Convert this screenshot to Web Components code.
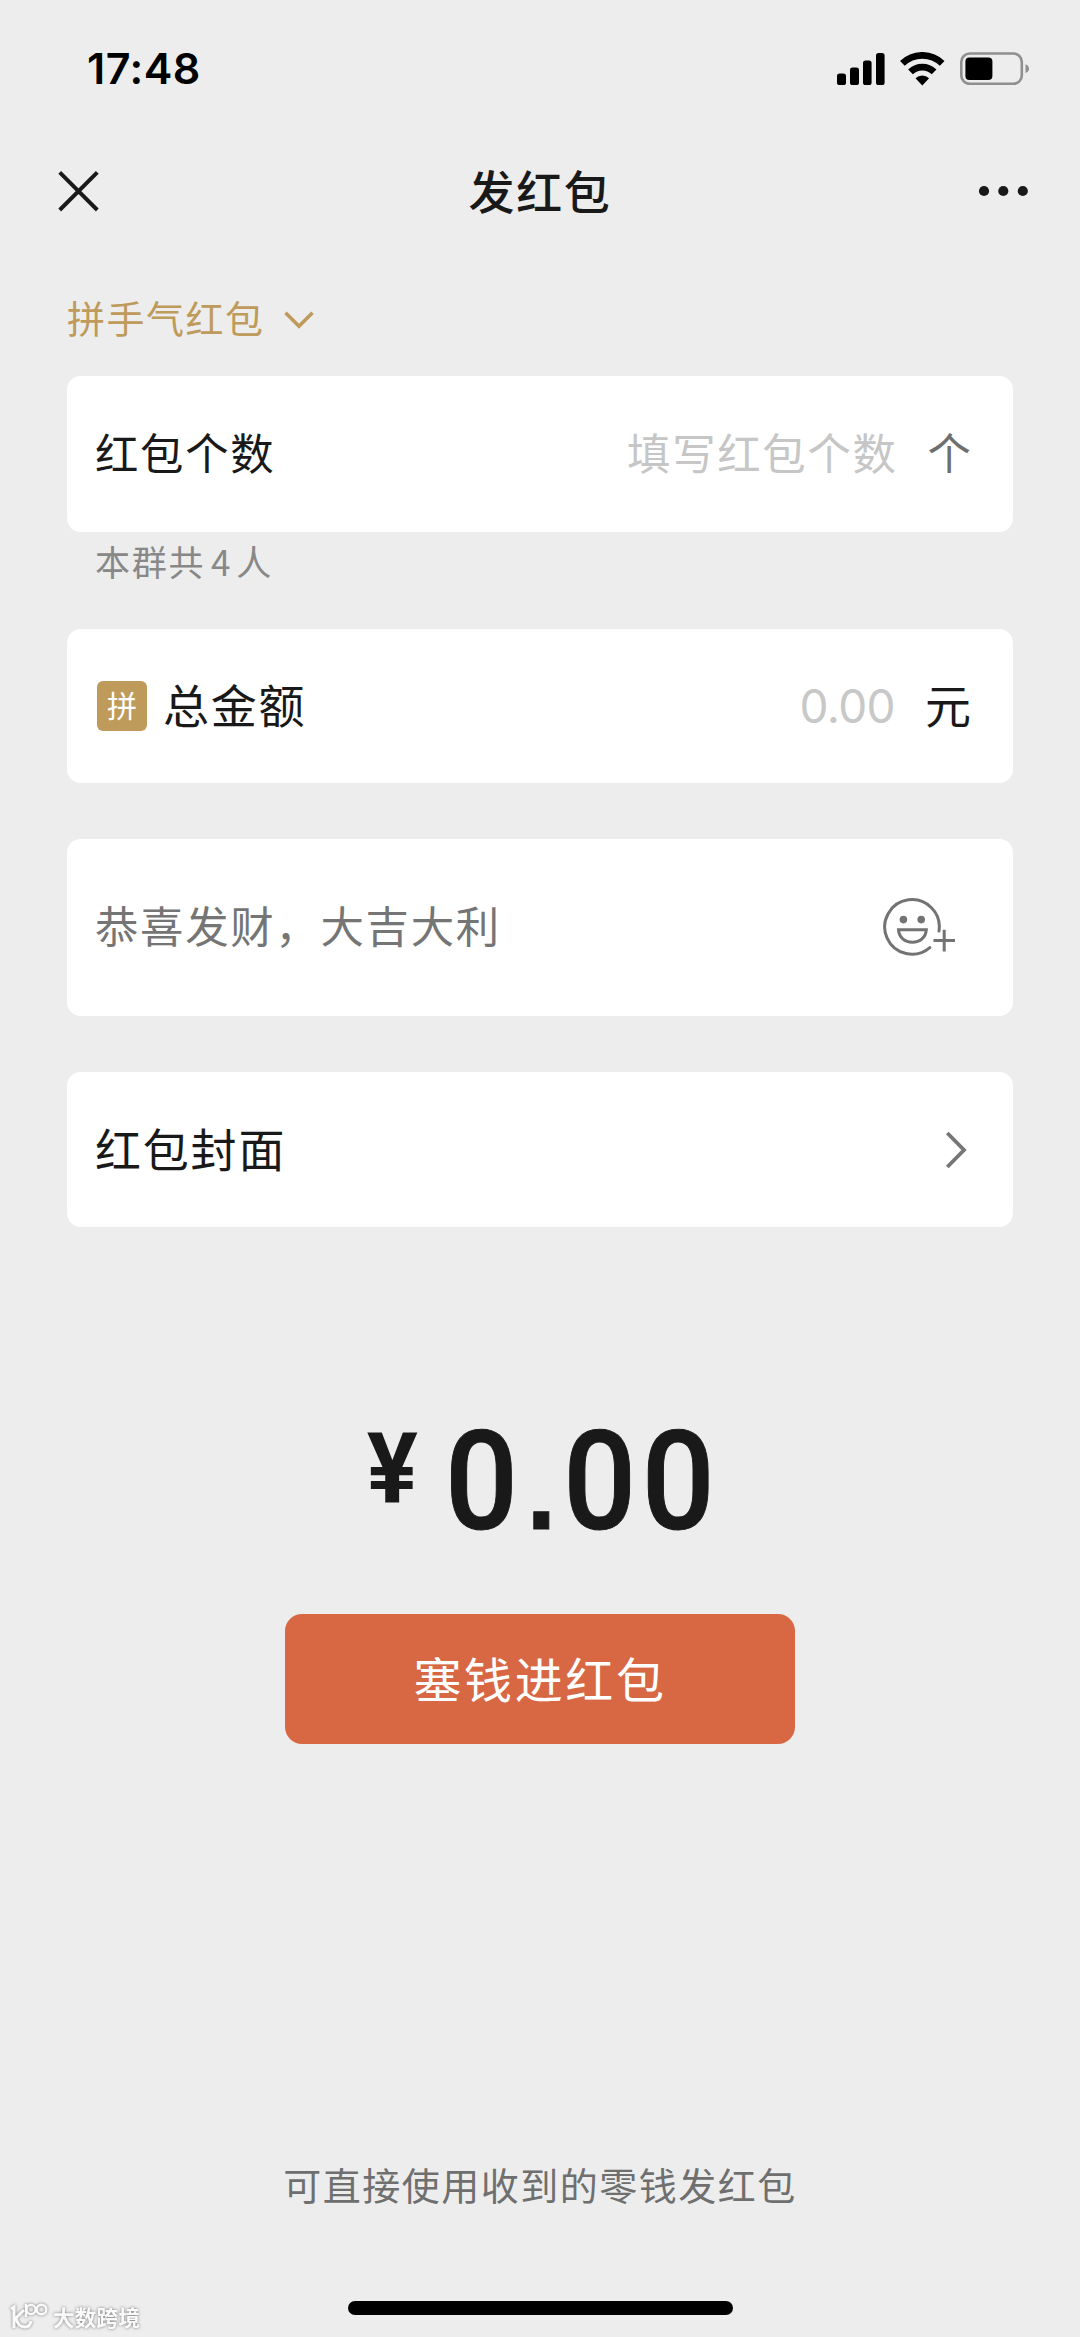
<!DOCTYPE html>
<html lang="zh-CN">
<head>
<meta charset="utf-8">
<title>发红包</title>
<style>
html,body{margin:0;padding:0;background:#ededed}
body{font-family:"Noto Sans CJK SC",sans-serif;color:#191919}
</style>
</head>
<body>
<packet-page></packet-page>
<script>
const define = (name, html) => customElements.define(name, class extends HTMLElement {
  constructor() {
    super();
    const t = document.createElement('template');
    t.innerHTML = html;
    this.attachShadow({mode: 'open'}).appendChild(t.content.cloneNode(true));
  }
});

define('status-bar', `
<style>
:host{display:flex;box-sizing:border-box;height:137px;padding:0 51px 0 87px;align-items:center;justify-content:space-between;color:#000}
.time{font:600 43px/1 Inter,sans-serif;letter-spacing:.5px}
.icons{display:flex;align-items:center;gap:15px}
svg{display:block}
</style>
<span class="time">17:48</span>
<div class="icons">
<svg width="48" height="33" viewBox="0 0 48 33"><rect x="0" y="21.5" width="9" height="11.5" rx="2.6"/><rect x="13" y="15.5" width="9" height="17.5" rx="2.6"/><rect x="26" y="8.5" width="8.6" height="24.5" rx="2.6"/><rect x="39" y="1" width="8.6" height="32" rx="2.6"/></svg>
<svg width="45" height="34" viewBox="0 0 45 34"><g fill="none" stroke="#000" stroke-width="6.7"><path d="M2.4 11.4A28.6 28.6 0 0 1 42.2 11.4"/><path d="M10.5 19.8A17 17 0 0 1 34.1 19.8"/></g><path d="M22.3 33.5L15.5 26.2A9.7 9.7 0 0 1 29.1 26.2Z"/></svg>
<svg width="69" height="33" viewBox="0 0 69 33"><rect x="1.3" y="1.5" width="60.5" height="30.4" rx="8.5" fill="none" stroke="#8f8f8f" stroke-width="2.6"/><rect x="5.4" y="5.4" width="27" height="22.6" rx="4"/><path d="M65.5 12.2Q69 13.4 69 16.6T65.5 21Z" fill="#8f8f8f"/></svg>
</div>`);

define('nav-bar', `
<style>
:host{display:grid;grid-template-columns:1fr auto 1fr;box-sizing:border-box;height:108px;padding:0 52px 0 58px;align-items:center}
.title{font-weight:500;font-size:46px;line-height:1;letter-spacing:1.6px;padding-bottom:.07em;margin-left:-6px}
svg{display:block}
svg:last-child{justify-self:end}
</style>
<svg width="41" height="41" viewBox="0 0 41 41"><path d="M1.7 1.4L39.3 39M39.3 1.4L1.7 39" stroke="#191919" stroke-width="3.9"/></svg>
<span class="title"><slot></slot></span>
<svg width="50" height="12" viewBox="0 0 50 12" fill="#191919"><circle cx="6" cy="6" r="5.1"/><circle cx="25.3" cy="6" r="5.1"/><circle cx="44.8" cy="6" r="5.1"/></svg>`);

define('packet-type', `
<style>
:host{display:flex;box-sizing:border-box;height:131px;padding:17px 67px 0;align-items:center;color:#be9a5b;font-size:38px;line-height:1;letter-spacing:1.5px}
span{padding-bottom:.11em}
svg{margin:2px 0 0 18px}
</style>
<span><slot></slot></span>
<svg width="32" height="18" viewBox="0 0 32 18"><path d="M2.5 1.8L16 15.2L29.5 1.8" fill="none" stroke="#be9a5b" stroke-width="3.6"/></svg>`);

define('form-card', `
<style>
:host{display:flex;box-sizing:border-box;height:155px;margin:0 67px;padding:0 42px 0 28px;align-items:center;background:#fff;border-radius:14px}
.end{margin-left:auto;display:flex;align-items:center}
</style>
<slot></slot><div class="end"><slot name="end"></slot></div>`);

define('ui-text', `
<style>
:host{display:block;font-size:var(--size,46px);line-height:1;letter-spacing:var(--track,1.8px);padding-bottom:.11em;white-space:nowrap}
</style><slot></slot>`);

define('luck-badge', `
<style>
:host{display:flex;box-sizing:border-box;width:50px;height:50px;margin:0 16px 0 2px;align-items:center;justify-content:center;background:#be9a5b;border-radius:6px;color:#fff;font-size:30px;line-height:1;padding-bottom:.11em}
</style><slot></slot>`);

define('emoji-add', `
<style>:host{display:block;margin:0 15px 2px 0}svg{display:block}</style>
<svg width="73" height="58" viewBox="0 0 73 58" fill="none" stroke="#737373" stroke-width="3">
<path d="M56 33A27.3 27.3 0 1 0 46.8 49.6" stroke-linecap="round"/>
<g fill="#737373" stroke="none"><circle cx="20.4" cy="21.6" r="3.8"/><circle cx="38.2" cy="21.6" r="3.8"/></g>
<path d="M15.5 31.8H43.3C42.8 39.2 37 44.2 29.4 44.2S16 39.2 15.5 31.8Z"/>
<path d="M50.5 42.5H72M61.2 31.7V53.5"/></svg>`);

define('chevron-right', `
<style>:host{display:block;margin-right:4px}svg{display:block}</style>
<svg width="22" height="38" viewBox="0 0 22 38"><path d="M2.3 2L19 19L2.3 36" fill="none" stroke="#757575" stroke-width="3.8"/></svg>`);

define('total-amount', `
<style>
:host{display:flex;box-sizing:border-box;height:387px;align-items:flex-start;font-family:Roboto,sans-serif;line-height:1;padding:186px 0 0 366px}
.yen{flex:none;width:52px;text-align:center;font-weight:700;font-size:98px;transform:scaleX(.975);margin:8px 27px 0 0}
.num{font-weight:500;font-size:138px;letter-spacing:6px;transform:scaleX(.93);transform-origin:0 0;white-space:nowrap;-webkit-text-stroke:1px #191919}
.dot{font-family:"Liberation Sans",sans-serif;font-weight:700;font-size:115px;line-height:0;margin:0 1.7px 0 3.1px}
</style>
<span class="yen">¥</span><span class="num">0<span class="dot">.</span>00</span>`);

define('pay-button', `
<style>
:host{display:flex;box-sizing:border-box;width:510px;height:130px;padding-top:2px;margin:0 auto;align-items:center;justify-content:center;background:#d86844;border-radius:17px;color:#fff}
</style><ui-text style="--size:48px;--track:2.6px"><slot></slot></ui-text>`);

define('source-mark', `
<style>
:host{position:absolute;left:8px;top:2301px;display:flex;align-items:center;gap:4px;color:#fafafa;filter:drop-shadow(0 0 1.5px #777)}
span{font-size:21.5px;font-weight:700;line-height:1;letter-spacing:.3px;padding-top:2px}
</style>
<svg width="41" height="30" viewBox="0 0 41 30" fill="none" stroke="#fafafa" stroke-width="3"><path d="M3 8L6 6V27M16 9L8 17Q10 26 17 26Q22 26 23 20"/><path d="M18 3V16" stroke-width="2.4"/><circle cx="23" cy="8.5" r="4.6" stroke-width="2.4"/><circle cx="33.5" cy="8.5" r="4.8" stroke-width="2.4"/></svg>
<span><slot></slot></span>`);

define('packet-page', `
<style>
:host{display:flex;flex-direction:column;position:relative;box-sizing:border-box;width:1080px;height:2337px;overflow:hidden;background:#ededed;padding-bottom:22px}
.hint{height:97px;box-sizing:border-box;padding:11px 95px 0;color:#888;--size:35px;--track:1.7px}
.hint b{font-weight:400;margin:0 4px 0 6px}
.faint{color:#c6c6c6}
.money{font:400 46px/1 Inter,sans-serif;letter-spacing:-.6px;padding-top:1px;color:#c8c8c8}
.note{margin-top:auto;align-self:center;color:#6f6f6f;margin-bottom:94px}
.home{width:385px;height:14px;border-radius:7px;background:#000;align-self:center}
</style>
<status-bar></status-bar>
<nav-bar>发红包</nav-bar>
<packet-type>拼手气红包</packet-type>
<form-card style="height:156px;--size:43.4px;--track:1.7px"><ui-text>红包个数</ui-text>
<ui-text slot="end" class="faint">填写红包个数</ui-text><ui-text slot="end" style="color:#6f6f6f;margin-left:30px;--track:0px">个</ui-text></form-card>
<div class="hint"><ui-text>本群共<b>4</b>人</ui-text></div>
<form-card style="height:154px"><luck-badge>拼</luck-badge><ui-text>总金额</ui-text>
<span slot="end" class="money">0.00</span><ui-text slot="end" style="margin-left:30px;--track:0px">元</ui-text></form-card>
<form-card style="height:177px;margin-top:56px;--size:43.4px;--track:1.7px"><ui-text style="color:#757575">恭喜发财，大吉大利</ui-text><emoji-add slot="end"></emoji-add></form-card>
<form-card style="height:155px;margin-top:56px"><ui-text>红包封面</ui-text><chevron-right slot="end"></chevron-right></form-card>
<total-amount></total-amount>
<pay-button>塞钱进红包</pay-button>
<ui-text class="note" style="--size:38px;--track:1.5px">可直接使用收到的零钱发红包</ui-text>
<div class="home"></div>
<source-mark>大数跨境</source-mark>`);
</script>
</body>
</html>
